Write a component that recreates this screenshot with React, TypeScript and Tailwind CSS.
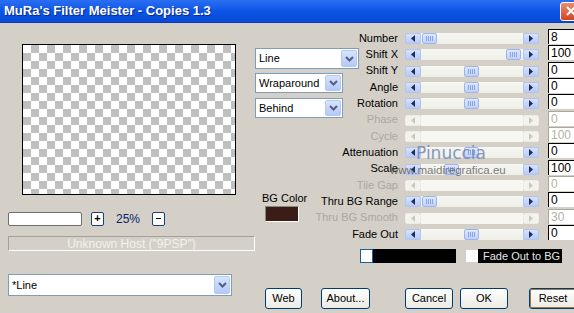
import React from 'react'

type Row = { label: string; value: string; pos?: number; disabled?: boolean }

const rows: Row[] = [
  { label: 'Number', value: '8', pos: 1 },
  { label: 'Shift X', value: '100', pos: 85 },
  { label: 'Shift Y', value: '0', pos: 43 },
  { label: 'Angle', value: '0', pos: 43 },
  { label: 'Rotation', value: '0', pos: 43 },
  { label: 'Phase', value: '0', disabled: true },
  { label: 'Cycle', value: '100', disabled: true },
  { label: 'Attenuation', value: '0', pos: 43 },
  { label: 'Scale', value: '100', pos: 23 },
  { label: 'Tile Gap', value: '0', disabled: true },
  { label: 'Thru BG Range', value: '0', pos: 1 },
  { label: 'Thru BG Smooth', value: '30', disabled: true },
  { label: 'Fade Out', value: '0', pos: 43 },
]

const ArrowBtn = ({ dir, disabled }: { dir: 'l' | 'r'; disabled?: boolean }) => (
  <div
    className={`flex h-full w-[16px] shrink-0 items-center justify-center rounded-[2px] border ${
      disabled ? 'border-[#ecebe4] bg-[#f3f2ec]' : 'border-[#b1c5f3] bg-linear-to-b from-[#d6e2fd] to-[#b7cbf8]'
    }`}
  >
    <svg width="4" height="7" viewBox="0 0 4 7">
      <path d={dir === 'l' ? 'M4 0L0 3.5L4 7Z' : 'M0 0L4 3.5L0 7Z'} fill={disabled ? '#cbc9bd' : '#1d2d5a'} />
    </svg>
  </div>
)

const Slider = ({ pos, disabled }: { pos?: number; disabled?: boolean }) => (
  <div className="ml-[7px] flex h-[11px] w-[134px] shrink-0">
    <ArrowBtn dir="l" disabled={disabled} />
    <div className={`flex flex-1 ${disabled ? 'bg-[#f7f6f1]' : 'bg-linear-to-b from-[#f7f7f3] to-[#efeee8]'}`}>
      {!disabled && (
        <div
          className="flex h-full w-[15px] items-center justify-center gap-[1px] rounded-[2px] border border-[#9db4ec] bg-linear-to-b from-[#dfe8fd] to-[#bfd1f9]"
          style={{ marginLeft: pos }}
        >
          {[0, 1, 2, 3].map((i) => (
            <span key={i} className="h-[5px] w-[1px] bg-[#8aa4e0]" />
          ))}
        </div>
      )}
    </div>
    <ArrowBtn dir="r" disabled={disabled} />
  </div>
)

const Chevron = () => (
  <div className="my-[1px] mr-[1px] flex w-[16px] items-center justify-center rounded-[2px] border border-[#b4c8f4] bg-linear-to-b from-[#d8e3fd] to-[#b5c9f7]">
    <svg width="9" height="6" viewBox="0 0 9 6">
      <path d="M1 1L4.5 4.5L8 1" stroke="#4d6185" strokeWidth="2" fill="none" />
    </svg>
  </div>
)

const Combo = ({ text, w }: { text: string; w: string }) => (
  <div className={`flex h-full items-stretch border border-[#7f9db9] bg-white ${w}`}>
    <span className="flex flex-1 items-center pl-[3px] text-[11px]">{text}</span>
    <Chevron />
  </div>
)

const XpButton = ({ text, className }: { text: string; className: string }) => (
  <div
    className={`flex h-[21px] items-center justify-center rounded-[3px] border border-[#003c74] bg-linear-to-b from-[#ffffff] to-[#ebeae3] text-[11px] ${className}`}
  >
    {text}
  </div>
)

export default function App() {
  return (
    <div className="relative flex h-[313px] w-[574px] flex-col overflow-hidden bg-[#d4d0c8] font-['Liberation_Sans',Arial,sans-serif] text-[11px] text-black">
      {/* title bar */}
      <div className="flex h-[23px] shrink-0 items-center border-b border-[#0a3cb4] bg-linear-to-b from-[#2a6ef2] via-[#0a55e6] to-[#0849d6]">
        <span className="pl-[4px] text-[13px] font-bold text-white [text-shadow:1px_1px_#0b2a8a]">
          MuRa's Filter Meister - Copies 1.3
        </span>
        <div className="mr-[-8px] ml-auto flex h-[19px] w-[22px] items-center justify-center rounded-[3px] border border-white bg-linear-to-b from-[#e98b6f] to-[#d4431c]">
          <svg width="10" height="10" viewBox="0 0 10 10">
            <path d="M1 1L9 9M9 1L1 9" stroke="white" strokeWidth="2" />
          </svg>
        </div>
      </div>

      <div className="flex flex-1">
        {/* left column */}
        <div className="flex w-[255px] shrink-0 flex-col pl-[8px]">
          <div className="mt-[21px] ml-[14px] h-[151px] w-[214px] border border-black bg-[repeating-conic-gradient(#c0c0c0_0_25%,#ffffff_0_50%)] bg-[length:16px_16px]" />
          <div className="mt-[16px] flex h-[15px] items-center">
            <div className="h-[14px] w-[74px] rounded-[2px] border border-[#6f6f6f] bg-white" />
            <div className="ml-[9px] flex h-[14px] w-[13px] items-center justify-center rounded-[2px] border border-[#1c3f74] bg-white text-[11px] leading-none font-bold">
              +
            </div>
            <span className="w-[48px] text-center text-[12px] text-[#0a1f6a]">25%</span>
            <div className="flex h-[14px] w-[13px] items-center justify-center rounded-[2px] border border-[#1c3f74] bg-white">
              <span className="h-[1px] w-[5px] bg-black" />
            </div>
          </div>
          <div className="mt-[10px] flex h-[15px] w-[247px] items-center justify-center border border-t-[#a3a199] border-r-white border-b-white border-l-[#a3a199] text-[12px] text-[#f2f1ec]">
            Unknown Host ("9PSP")
          </div>
          <div className="mt-auto mb-[17px] h-[22px]">
            <Combo text="*Line" w="w-[224px]" />
          </div>
        </div>

        {/* right area */}
        <div className="flex flex-1 flex-col">
          <div className="flex">
            <div className="flex w-[105px] shrink-0 flex-col pt-[25px]">
              <div className="h-[21px]">
                <Combo text="Line" w="w-[104px]" />
              </div>
              <div className="mt-[4px] h-[20px]">
                <Combo text="Wraparound" w="w-[88px]" />
              </div>
              <div className="mt-[5px] h-[20px]">
                <Combo text="Behind" w="w-[88px]" />
              </div>
              <span className="mt-[74px] ml-[7px] leading-[13px]">BG Color</span>
              <div className="mt-[1px] ml-[10px] h-[16px] w-[34px] border border-t-[#8a877e] border-r-white border-b-white border-l-[#8a877e] bg-[#3a1d17]" />
            </div>

            <div className="flex flex-1 flex-col pt-[6px]">
              {rows.map((r) => (
                <div key={r.label} className="flex h-[16.33px] items-start">
                  <div
                    className={`flex h-[15px] w-[38px] shrink-0 items-center justify-end whitespace-nowrap pt-[3px] text-[11px] ${
                      r.disabled ? 'text-[#aca899]' : 'text-black'
                    }`}
                  >
                    {r.label}
                  </div>
                  <div className="mt-[4px]">
                    <Slider pos={r.pos} disabled={r.disabled} />
                  </div>
                  <div
                    className={`ml-[9px] flex h-[15px] w-[30px] shrink-0 items-center border-t border-l bg-white pl-[2px] text-[12px] ${
                      r.disabled ? 'border-[#aca899] text-[#b5b2a6]' : 'border-black text-black'
                    }`}
                  >
                    {r.value}
                  </div>
                </div>
              ))}
              <div className="mt-[8px] flex h-[14px] items-center">
                <div className="flex h-[14px] w-[96px] bg-black">
                  <div className="h-[14px] w-[13px] border border-[#1d5aa8] bg-white" />
                </div>
                <div className="ml-[10px] h-[12px] w-[12px] bg-white" />
                <div className="flex h-[14px] w-[84px] items-center bg-black pl-[5px] text-[11px] text-[#e6e6e6]">
                  Fade Out to BG
                </div>
              </div>
            </div>
          </div>

          <div className="mt-auto mb-[4px] flex pl-[10px]">
            <XpButton text="Web" className="w-[37px]" />
            <XpButton text="About..." className="ml-[19px] w-[49px]" />
            <XpButton text="Cancel" className="ml-[35px] w-[48px]" />
            <XpButton text="OK" className="ml-[7px] w-[48px]" />
            <XpButton text="Reset" className="ml-[21px] w-[48px] shrink-0 shadow-[inset_0_0_0_1px_#9a7a48]" />
          </div>
        </div>
      </div>

      {/* watermark */}
      <div className="pointer-events-none absolute top-[141px] left-[416px] font-['DejaVu_Sans',sans-serif] text-[17px] text-[#6b83b4] opacity-80">
        Pinuccia
      </div>
      <div className="pointer-events-none absolute top-[162px] left-[390px] text-[11.5px] text-[#4a4a4a] opacity-70">
        www.maidiregrafica.eu
      </div>
    </div>
  )
}
